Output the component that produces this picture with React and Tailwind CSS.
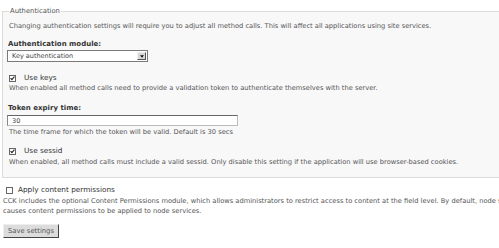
const FONT = { fontFamily: '"DejaVu Sans", Verdana, sans-serif' };

function Check({ checked }) {
  return (
    <span className="inline-flex items-center justify-center w-[7px] h-[7px] border border-[#666] bg-white shrink-0">
      {checked && (
        <svg viewBox="0 0 7 7" className="w-[5px] h-[5px]">
          <path d="M0.8 3 L2.6 5 L6.2 0.8" fill="none" stroke="#222" strokeWidth="1.5" />
        </svg>
      )}
    </span>
  );
}

function Desc({ children, className = "" }) {
  return <p className={`text-[6.7px] leading-[10px] h-[10px] whitespace-nowrap text-[#555] ${className}`}>{children}</p>;
}

function Label({ children, className = "" }) {
  return <p className={`text-[7px] font-bold text-[#333] leading-[10px] h-[10px] ${className}`}>{children}</p>;
}

function CheckRow({ checked, label, gap, className = "" }) {
  return (
    <div className={`flex items-center h-[10px] ${className}`}>
      <Check checked={checked} />
      <span className={`text-[7.3px] text-[#333] leading-[10px] ${gap}`}>{label}</span>
    </div>
  );
}

export default function App() {
  return (
    <div className="w-[499px] h-[248px] bg-white overflow-hidden text-[#444]" style={FONT}>
      <fieldset className="ml-[2px] mr-[-30px] mt-[6px] border border-[#dcdcdc] bg-[#f8f8f9] pl-[4px] pb-[10px]">
        <legend className="ml-[2px] px-[1px] text-[6.8px] text-[#555] leading-[10px]">Authentication</legend>
        <Desc className="mt-[5px] ml-[2px]">
          Changing authentication settings will require you to adjust all method calls. This will affect all applications using site services.
        </Desc>

        <Label className="mt-[8px] ml-[1px]">Authentication module:</Label>
        <div className="mt-[1px] flex items-center w-[141px] h-[12px] border border-[#7a7a7a] bg-white">
          <span className="flex-1 pl-[4px] text-[6.5px] text-[#444] leading-[10px]">Key authentication</span>
          <span className="flex items-center justify-center w-[9px] h-[8px] mr-[1px] border border-t-[#eee] border-l-[#eee] border-r-[#555] border-b-[#555] bg-[#d8d8d8]">
            <svg viewBox="0 0 6 4" className="w-[4px] h-[3px]"><path d="M0 0 H6 L3 4 Z" fill="#111" /></svg>
          </span>
        </div>

        <CheckRow checked label="Use keys" gap="ml-[8px]" className="mt-[11px] pl-[2px]" />
        <Desc className="ml-[2px]">When enabled all method calls need to provide a validation token to authenticate themselves with the server.</Desc>

        <Label className="mt-[10px] ml-[1px]">Token expiry time:</Label>
        <div className="mt-[2px] w-[231px] h-[11px] border border-[#bbb] border-t-[#666] border-l-[#888] bg-white pl-[4px] flex items-center">
          <span className="text-[6.5px] text-[#444] leading-[10px]">30</span>
        </div>
        <Desc className="mt-[1px] ml-[2px]">The time frame for which the token will be valid. Default is 30 secs</Desc>

        <CheckRow checked label="Use sessid" gap="ml-[8px]" className="mt-[9px] pl-[2px]" />
        <Desc className="mt-[1px] ml-[2px]">When enabled, all method calls must include a valid sessid. Only disable this setting if the application will use browser-based cookies.</Desc>
      </fieldset>

      <CheckRow label="Apply content permissions" gap="ml-[5px]" className="mt-[7px] pl-[6px]" />
      <div className="mt-[1px] pl-[3px]">
        <Desc>CCK includes the optional Content Permissions module, which allows administrators to restrict access to content at the field level. By default, node services</Desc>
        <Desc>causes content permissions to be applied to node services.</Desc>
      </div>

      <button className="mt-[2px] ml-[3px] h-[14px] w-[56px] bg-[#dcdcdc] border border-t-[#eee] border-l-[#eee] border-r-[#444] border-b-[#444] text-[6.8px] text-[#555] leading-[10px]">
        Save settings
      </button>
    </div>
  );
}
